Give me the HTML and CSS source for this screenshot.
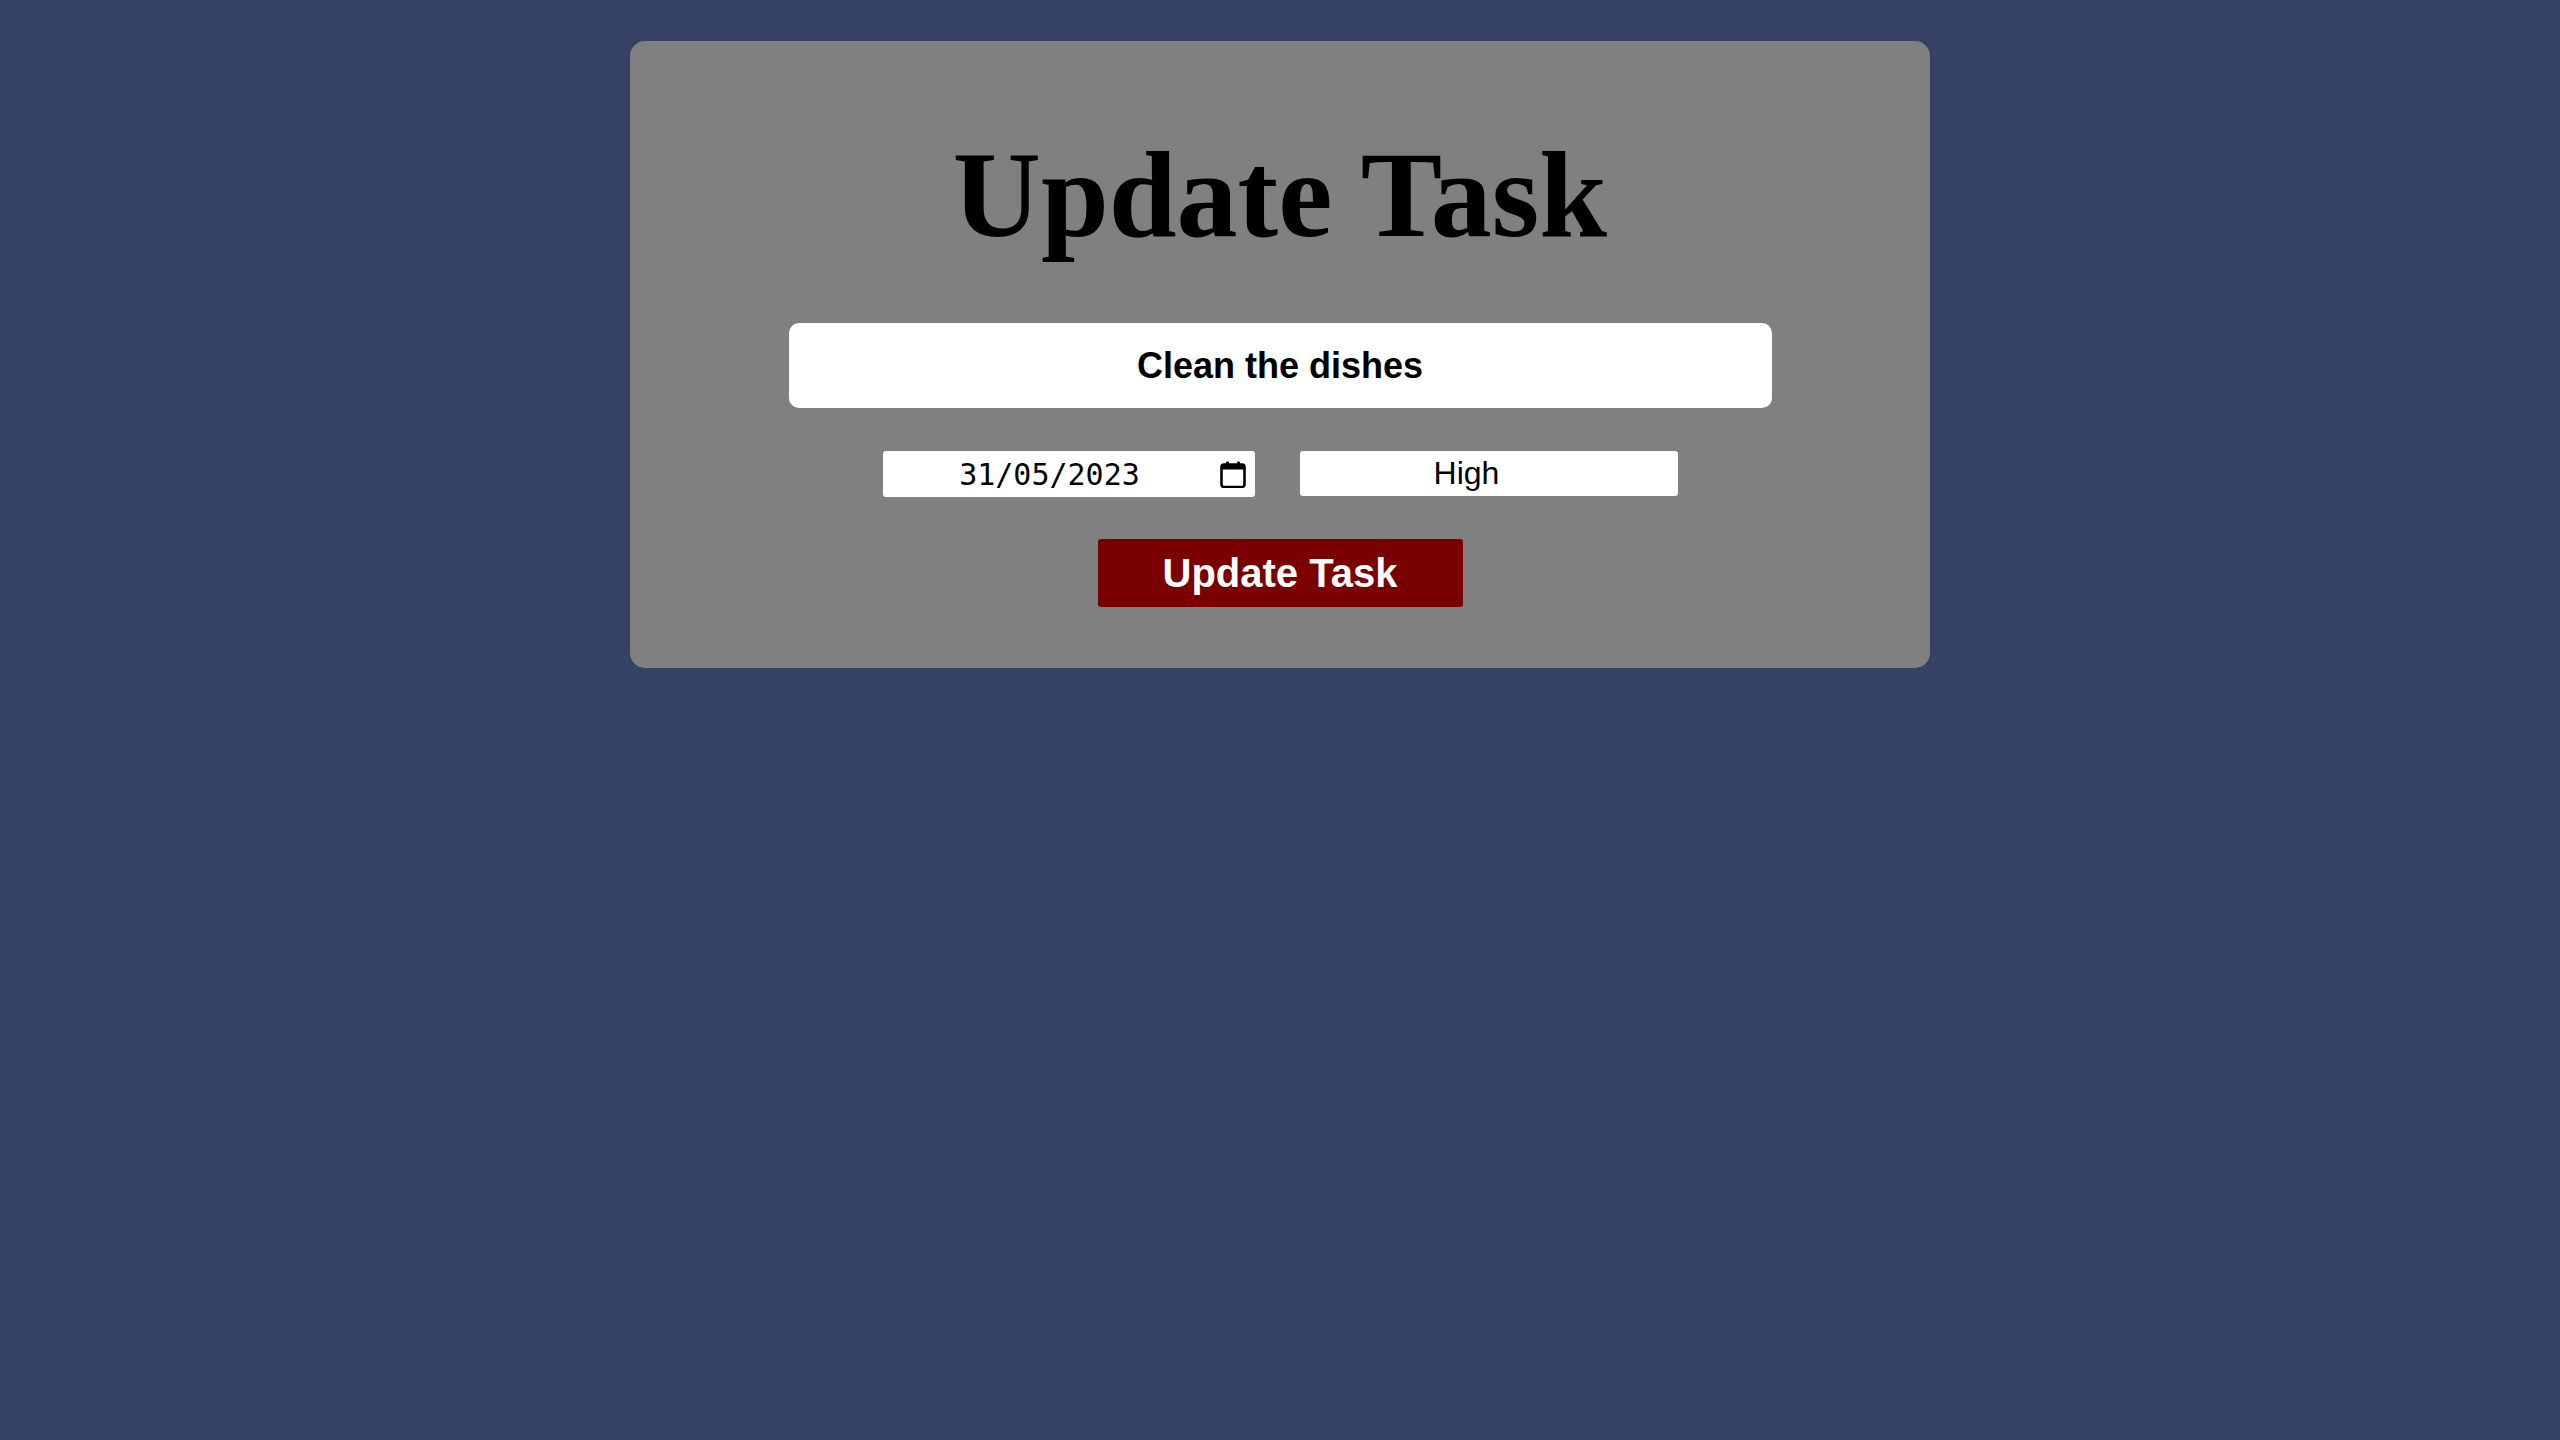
FILE: index.html
```html
<!DOCTYPE html>
<html lang="en-GB">
<head>
<meta charset="utf-8">
<title>Update Task</title>
<link rel="stylesheet" href="styles.css">
</head>
<body>
<main class="card">
  <h1 class="title">Update Task</h1>
  <form class="task-form">
    <input class="task-name" type="text" value="Clean the dishes">
    <div class="row">
      <div class="task-date" role="textbox" aria-label="Due date">
        <span class="date-text">31/05/2023</span>
        <svg class="cal-icon" width="26" height="27" viewBox="0 0 26 27" aria-hidden="true">
          <rect x="6" y="0.5" width="3" height="5" rx="1" fill="#000"/>
          <rect x="17" y="0.5" width="3" height="5" rx="1" fill="#000"/>
          <path d="M4 3.5h18a2.5 2.5 0 0 1 2.5 2.5v17.5a2.5 2.5 0 0 1-2.5 2.5H4a2.5 2.5 0 0 1-2.5-2.5V6A2.5 2.5 0 0 1 4 3.5z" fill="none" stroke="#000" stroke-width="2.6"/>
          <rect x="1.5" y="3.5" width="23" height="5" fill="#000"/>
        </svg>
      </div>
      <input class="task-priority" type="text" value="High">
    </div>
    <button class="submit" type="button">Update Task</button>
  </form>
</main>
</body>
</html>
```

FILE: styles.css
```css
html, body {
  margin: 0;
  padding: 0;
}

body {
  background: #354263;
  min-height: 1440px;
  font-family: "Liberation Sans", Arial, sans-serif;
}

.card {
  width: 1300px;
  box-sizing: border-box;
  margin: 41px auto 0;
  padding: 84px 0 61px;
  background: #808080;
  border-radius: 15px;
  display: flex;
  flex-direction: column;
  align-items: center;
}

.title {
  margin: 0 0 58px;
  font-family: "Liberation Serif", "Times New Roman", serif;
  font-weight: bold;
  font-size: 122px;
  line-height: normal;
  color: #000;
}

.task-form {
  display: flex;
  flex-direction: column;
  align-items: center;
}

.task-name {
  width: 983px;
  height: 85px;
  box-sizing: border-box;
  margin: 0 0 43px;
  border: none;
  border-radius: 10px;
  background: #fff;
  text-align: center;
  font-family: "Liberation Sans", Arial, sans-serif;
  font-weight: bold;
  font-size: 36px;
  color: #000;
  outline: none;
}

.row {
  display: flex;
  gap: 45px;
  margin-bottom: 42px;
}

.task-date {
  width: 372px;
  height: 46px;
  box-sizing: border-box;
  border-radius: 3px;
  background: #fff;
  display: flex;
  align-items: center;
  padding: 0 9px 0 0;
}

.date-text {
  flex: 1;
  text-align: center;
  font-family: "DejaVu Sans Mono", "Liberation Mono", monospace;
  font-size: 30px;
  color: #000;
}

.cal-icon {
  flex: none;
  margin-left: 3px;
}

.task-priority {
  width: 378px;
  height: 45px;
  box-sizing: border-box;
  border: none;
  border-radius: 3px;
  background: #fff;
  text-align: center;
  font-family: "Liberation Sans", Arial, sans-serif;
  font-size: 32px;
  color: #000;
  padding: 0 44px 0 0;
}

.submit {
  width: 365px;
  height: 68px;
  box-sizing: border-box;
  border: none;
  border-radius: 3px;
  background: #7a0000;
  color: #fff;
  font-family: "Liberation Sans", Arial, sans-serif;
  font-weight: bold;
  font-size: 40px;
  padding: 0;
  cursor: pointer;
}
```
